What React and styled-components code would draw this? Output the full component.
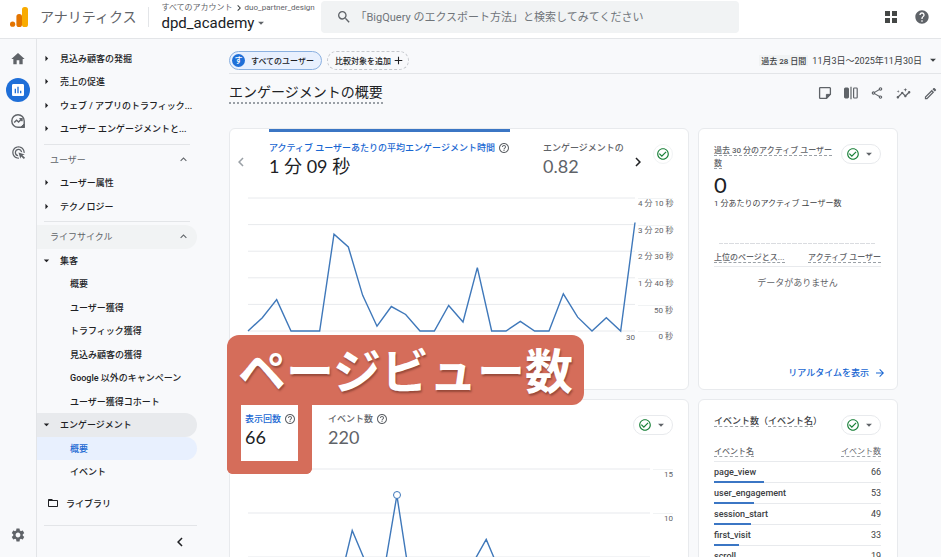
import React from "react";
import styled, { createGlobalStyle } from "styled-components";
import {
  MdAdd,
  MdAdsClick,
  MdArrowDropDown,
  MdArrowForward,
  MdArrowRight,
  MdCheckCircleOutline,
  MdChevronLeft,
  MdChevronRight,
  MdExpandLess,
  MdFolderOpen,
  MdHelp,
  MdHelpOutline,
  MdHome,
  MdInsertChart,
  MdInsights,
  MdOutlineEdit,
  MdOutlineShare,
  MdSearch,
  MdSettings,
} from "react-icons/md";

const menu = [
  { type: "group", label: "ビジネス目標", muted: true },
  { type: "item", label: "見込み顧客の発掘", arrow: "right" },
  { type: "item", label: "売上の促進", arrow: "right" },
  { type: "item", label: "ウェブ / アプリのトラフィック...", arrow: "right" },
  { type: "item", label: "ユーザー エンゲージメントと...", arrow: "right" },
  { type: "line" },
  { type: "group", label: "ユーザー" },
  { type: "item", label: "ユーザー属性", arrow: "right" },
  { type: "item", label: "テクノロジー", arrow: "right" },
  { type: "line" },
  { type: "group", label: "ライフサイクル", bg: "#f1f3f4" },
  { type: "item", label: "集客", arrow: "down" },
  { type: "sub", label: "概要" },
  { type: "sub", label: "ユーザー獲得" },
  { type: "sub", label: "トラフィック獲得" },
  { type: "sub", label: "見込み顧客の獲得" },
  { type: "sub", label: "Google 以外のキャンペーン" },
  { type: "sub", label: "ユーザー獲得コホート" },
  { type: "item", label: "エンゲージメント", arrow: "down", bg: "#e8eaed" },
  { type: "sub", label: "概要", bg: "#e8f0fe", active: true },
  { type: "sub", label: "イベント" },
];

const engagement = [
  0, 25, 59, 0, 0, 0, 182, 158, 67, 9, 46, 31, 0, 0, 48, 17, 119, 0, 0, 18, 0,
  0, 70, 26, 0, 25, 0, 204,
];
const views = [
  0, 1, 0, 0, 2, 0, 1, 8, 4, 2, 12, 1, 0, 0, 1, 4, 7, 3, 0, 1, 0, 0, 2, 0, 0, 1,
  0, 3,
];

const events = [
  { name: "page_view", count: 66 },
  { name: "user_engagement", count: 53 },
  { name: "session_start", count: 49 },
  { name: "first_visit", count: 33 },
  { name: "scroll", count: 19 },
];

const LogoSvg = () => (
  <svg width="18" height="20" viewBox="0 0 18 20" aria-hidden="true">
    <rect x="12" y="0" width="6" height="20" rx="2.6" fill="#f9ab00" />
    <rect x="6.4" y="7" width="5.6" height="13" rx="2.6" fill="#e37400" />
    <circle cx="2.6" cy="17.2" r="2.6" fill="#e37400" />
  </svg>
);

const ExploreSvg = () => (
  <svg width="16" height="16" viewBox="0 0 16 16" fill="none" stroke="#5f6368">
    <path
      d="M8 1.8a6.2 6.2 0 1 0 0 12.4h6.2V8A6.2 6.2 0 0 0 8 1.8Z"
      strokeWidth="1.4"
    />
    <path d="M4.2 9.6 6.6 7.2l2 1.8 3.2-3.2M9.4 5.6H12v2.6" strokeWidth="1.4" />
    <path d="M11 13.9 14 11v3Z" fill="#5f6368" />
  </svg>
);

const NoteSvg = () => (
  <svg width="14" height="14" viewBox="0 0 14 14" fill="none" stroke="#5f6368">
    <path
      d="M2.2 1.7h9.6a.6.6 0 0 1 .6.6v6L8.6 12.3H2.2a.6.6 0 0 1-.6-.6V2.3a.6.6 0 0 1 .6-.6Z"
      strokeWidth="1.3"
    />
    <path d="M8.4 12.2V8.4h3.8Z" fill="#5f6368" />
  </svg>
);

const CompareSvg = () => (
  <svg width="14" height="14" viewBox="0 0 14 14" fill="none" stroke="#5f6368">
    <rect x="0.5" y="2" width="4" height="10" rx="0.8" fill="#5f6368" />
    <path d="M7 0.8v12.4" strokeWidth="1.2" />
    <rect x="9.6" y="2" width="3.6" height="10" rx="0.8" strokeWidth="1.2" />
  </svg>
);

const AppsSvg = () => (
  <svg width="14" height="14" viewBox="0 0 14 14" fill="#444746">
    <rect x="1" y="1" width="5" height="5" />
    <rect x="8" y="1" width="5" height="5" />
    <rect x="1" y="8" width="5" height="5" />
    <rect x="8" y="8" width="5" height="5" />
  </svg>
);

const LineChart = ({ data, max, rows, marker }) => {
  const points = data
    .map((v, i) => `${i},${(1 - v / max) * 100}`)
    .join(" ");
  return (
    <Plot>
      <svg
        viewBox={`0 0 ${data.length - 1} 100`}
        preserveAspectRatio="none"
        aria-hidden="true"
      >
        {Array.from({ length: rows + 1 }, (_, i) => (
          <line
            key={i}
            x1="0"
            x2={data.length - 1}
            y1={(i * 100) / rows}
            y2={(i * 100) / rows}
            stroke="#e8eaed"
            vectorEffect="non-scaling-stroke"
          />
        ))}
        <polyline
          points={points}
          fill="none"
          stroke="#3f78ba"
          strokeWidth="1.4"
          vectorEffect="non-scaling-stroke"
        />
      </svg>
      {marker !== undefined && (
        <Marker
          style={{
            left: `${(marker / (data.length - 1)) * 100}%`,
            top: `${(1 - data[marker] / max) * 100}%`,
          }}
        />
      )}
    </Plot>
  );
};

const CheckMenu = ({ label }) => (
  <StatusButton aria-label={label}>
    <MdCheckCircleOutline size={14} color="#188038" />
    <MdArrowDropDown size={14} color="#5f6368" />
  </StatusButton>
);

const App = () => {
  return (
    <Page>
      <GlobalStyle />
      <Header>
        <Brand>
          <LogoSvg />
          <span>アナリティクス</span>
        </Brand>
        <Account>
          <p>
            すべてのアカウント
            <MdChevronRight size={12} color="#3c4043" />
            duo_partner_design
          </p>
          <button>
            dpd_academy
            <MdArrowDropDown size={14} color="#5f6368" />
          </button>
        </Account>
        <SearchBox>
          <MdSearch size={16} color="#5f6368" />
          <input
            type="text"
            aria-label="検索"
            placeholder="「BigQuery のエクスポート方法」と検索してみてください"
          />
        </SearchBox>
        <HeaderTools>
          <IconButton aria-label="アプリ">
            <AppsSvg />
          </IconButton>
          <IconButton aria-label="ヘルプ">
            <MdHelp size={16} />
          </IconButton>
        </HeaderTools>
      </Header>

      <Body>
        <Rail>
          <RailButton aria-label="ホーム">
            <MdHome size={16} />
          </RailButton>
          <RailButton aria-label="レポート" $active>
            <MdInsertChart size={16} />
          </RailButton>
          <RailButton aria-label="探索">
            <ExploreSvg />
          </RailButton>
          <RailButton aria-label="広告">
            <MdAdsClick size={15} />
          </RailButton>
          <RailButton className="bottom" aria-label="管理">
            <MdSettings size={16} />
          </RailButton>
        </Rail>

        <Sidebar>
          <MenuList>
            {menu.map((row, i) => {
              if (row.type === "line") return <MenuLine key={i} />;
              return (
                <MenuRow key={i} $bg={row.bg}>
                  <MenuLink
                    href="#"
                    $type={row.type}
                    $active={row.active}
                  >
                    {row.type === "item" && (
                      <i>
                        {row.arrow === "right" && <MdArrowRight size={13} />}
                        {row.arrow === "down" && <MdArrowDropDown size={13} />}
                      </i>
                    )}
                    <span>{row.label}</span>
                    {row.type === "group" && !row.muted && (
                      <MdExpandLess size={13} />
                    )}
                  </MenuLink>
                </MenuRow>
              );
            })}
            <MenuRow className="library">
              <MenuLink href="#" $type="library">
                <MdFolderOpen size={12} />
                <span>ライブラリ</span>
              </MenuLink>
            </MenuRow>
          </MenuList>
          <SidebarFooter>
            <IconButton aria-label="メニューを閉じる" $dark>
              <MdChevronLeft size={18} />
            </IconButton>
          </SidebarFooter>
        </Sidebar>

        <Main>
          <FilterBar>
            <UserChip>
              <em>す</em>すべてのユーザー
            </UserChip>
            <AddChip>
              比較対象を追加
              <MdAdd size={13} />
            </AddChip>
            <DateButton>
              <em>過去 28 日間</em>
              11月3日～2025年11月30日
              <MdArrowDropDown size={14} />
            </DateButton>
          </FilterBar>

          <TitleBar>
            <h1>エンゲージメントの概要</h1>
            <Tools>
              <IconButton aria-label="メモ">
                <NoteSvg />
              </IconButton>
              <IconButton aria-label="比較">
                <CompareSvg />
              </IconButton>
              <IconButton aria-label="共有">
                <MdOutlineShare size={14} />
              </IconButton>
              <IconButton aria-label="インサイト">
                <MdInsights size={15} />
              </IconButton>
              <IconButton aria-label="編集">
                <MdOutlineEdit size={15} />
              </IconButton>
            </Tools>
          </TitleBar>

          <Cards>
            <Card>
              <MetricHead className="pager">
                <IconButton className="prev" aria-label="前へ" $light>
                  <MdChevronLeft size={18} />
                </IconButton>
                <Metric className="wide" $active $bar>
                  <span>
                    アクティブ ユーザーあたりの平均エンゲージメント時間
                    <MdHelpOutline size={12} />
                  </span>
                  <strong>1 分 09 秒</strong>
                </Metric>
                <Metric>
                  <span>エンゲージメントの</span>
                  <strong>0.82</strong>
                </Metric>
                <IconButton className="next" aria-label="次へ" $dark>
                  <MdChevronRight size={18} />
                </IconButton>
                <StatusDot aria-label="データの状態">
                  <MdCheckCircleOutline size={14} color="#188038" />
                </StatusDot>
              </MetricHead>
              <ChartArea $scale={38} $height={133}>
                <LineChart data={engagement} max={250} rows={5} />
                <Scale $size={160}>
                  <li>4 分 10 秒</li>
                  <li>3 分 20 秒</li>
                  <li>2 分 30 秒</li>
                  <li>1 分 40 秒</li>
                  <li>50 秒</li>
                  <li>0 秒</li>
                </Scale>
                <Axis>30</Axis>
              </ChartArea>
            </Card>

            <Card>
              <SideHead>
                <h2>
                  <u>過去 30 分のアクティブ ユーザー数</u>
                </h2>
                <CheckMenu label="リアルタイムの状態" />
              </SideHead>
              <Realtime>
                <strong>0</strong>
                <p>1 分あたりのアクティブ ユーザー数</p>
                <EmptyBars>
                  {Array.from({ length: 30 }, (_, i) => (
                    <i key={i} />
                  ))}
                </EmptyBars>
                <RealtimeTable>
                  <thead>
                    <tr>
                      <th>
                        <u>上位のページとス...</u>
                      </th>
                      <th>
                        <u>アクティブ ユーザー</u>
                      </th>
                    </tr>
                  </thead>
                  <tbody>
                    <tr>
                      <td colSpan={2}>データがありません</td>
                    </tr>
                  </tbody>
                </RealtimeTable>
                <MoreLink href="#">
                  リアルタイムを表示
                  <MdArrowForward size={12} />
                </MoreLink>
              </Realtime>
            </Card>

            <Card>
              <MetricHead>
                <Metric $active>
                  <span>
                    表示回数
                    <MdHelpOutline size={12} />
                  </span>
                  <strong>66</strong>
                </Metric>
                <Metric>
                  <span>
                    イベント数
                    <MdHelpOutline size={12} />
                  </span>
                  <strong>220</strong>
                </Metric>
                <CheckMenu label="表示回数の状態" />
              </MetricHead>
              <ChartArea $scale={23} $height={132}>
                <LineChart data={views} max={15} rows={3} marker={10} />
                <Scale $size={176}>
                  <li>15</li>
                  <li>10</li>
                  <li>5</li>
                  <li>0</li>
                </Scale>
              </ChartArea>
              <Callout>
                <p>ページビュー数</p>
                <div />
              </Callout>
            </Card>

            <Card>
              <SideHead className="events">
                <h2>
                  <u>イベント数</u>（<u>イベント名</u>）
                </h2>
                <CheckMenu label="イベントの状態" />
              </SideHead>
              <EventTable>
                <thead>
                  <tr>
                    <th>
                      <u>イベント名</u>
                    </th>
                    <th>
                      <u>イベント数</u>
                    </th>
                  </tr>
                </thead>
                <tbody>
                  {events.map((event) => (
                    <tr key={event.name}>
                      <td>
                        {event.name}
                        <Bar style={{ width: `${(event.count / 66) * 40}%` }} />
                      </td>
                      <td>{event.count}</td>
                    </tr>
                  ))}
                </tbody>
              </EventTable>
            </Card>
          </Cards>
        </Main>
      </Body>
    </Page>
  );
};

const GlobalStyle = createGlobalStyle`
  * {
    box-sizing: border-box;
  }

  body {
    margin: 0;
    background: #f8f9fb;
    color: #202124;
    font-family: Roboto, "Noto Sans CJK JP", sans-serif;
    font-size: 9px;
  }

  h1, h2, p, ul {
    margin: 0;
    padding: 0;
  }

  ul {
    list-style: none;
  }

  em, i {
    font-style: normal;
  }

  u {
    text-decoration: none;
    border-bottom: 1px dashed #9aa0a6;
  }

  a {
    color: inherit;
    text-decoration: none;
  }

  button, input {
    margin: 0;
    padding: 0;
    border: none;
    background: none;
    color: inherit;
    font: inherit;
  }

  svg {
    flex: none;
  }
`;

const Page = styled.div`
  display: flex;
  flex-direction: column;
  height: 100vh;
  overflow: hidden;
`;

const Header = styled.header`
  position: relative;
  z-index: 2;
  display: flex;
  align-items: center;
  height: 39px;
  padding: 0 11px 4px 10px;
  border-bottom: 1px solid #e3e5e8;
  background: #fff;
`;

const Brand = styled.div`
  display: flex;
  align-items: center;
  gap: 12px;
  padding-right: 12px;
  border-right: 1px solid #e3e5e8;
  color: #5f6368;
  font-size: 14px;
  line-height: 20px;
`;

const Account = styled.div`
  flex: none;
  width: 172px;
  padding-left: 12px;
  white-space: nowrap;

  p {
    display: flex;
    align-items: center;
    color: #5f6368;
    font-size: 8px;
    line-height: 12px;
  }

  button {
    display: flex;
    align-items: center;
    font-size: 15px;
    line-height: 18px;
  }
`;

const SearchBox = styled.label`
  display: flex;
  flex: 0 1 418px;
  align-items: center;
  gap: 3px;
  height: 32px;
  padding: 0 15px;
  border-radius: 4px;
  background: #f1f3f4;

  input {
    flex: 1;
    min-width: 0;
    outline: none;
    font-size: 11px;
  }

  input::placeholder {
    color: #70757a;
    opacity: 1;
  }
`;

const HeaderTools = styled.div`
  display: flex;
  align-items: center;
  gap: 16px;
  margin-left: auto;
`;

const IconButton = styled.button`
  display: flex;
  align-items: center;
  justify-content: center;
  color: ${(p) => (p.$dark ? "#202124" : p.$light ? "#9aa0a6" : "#5f6368")};
`;

const Body = styled.div`
  display: flex;
  flex: 1;
  min-height: 0;
`;

const Rail = styled.nav`
  display: flex;
  flex: none;
  flex-direction: column;
  align-items: center;
  gap: 7px;
  width: 37px;
  padding: 8px 0 10px;
  border-right: 1px solid #e3e5e8;

  .bottom {
    margin-top: auto;
  }
`;

const RailButton = styled.button`
  display: flex;
  align-items: center;
  justify-content: center;
  width: 24px;
  height: 24px;
  border-radius: 50%;
  background: ${(p) => (p.$active ? "#1f6fd8" : "none")};
  color: ${(p) => (p.$active ? "#fff" : "#5f6368")};
`;

const Sidebar = styled.aside`
  display: flex;
  flex: none;
  flex-direction: column;
  width: 160px;
  margin-right: 26px;
`;

const MenuList = styled.ul`
  display: flex;
  flex: 1;
  flex-direction: column;
  margin-top: -16px;
  padding-bottom: 10px;

  .library {
    margin-top: 8px;
  }
`;

const MenuRow = styled.li`
  display: flex;
  flex: 1;
  border-radius: 0 12px 12px 0;
  background: ${(p) => p.$bg || "none"};
`;

const indent = { sub: 33, group: 13, library: 10, item: 3 };

const MenuLink = styled.a`
  display: flex;
  flex: 1;
  align-items: center;
  padding: 0 7px 0 ${(p) => indent[p.$type]}px;
  color: ${(p) => (p.$active ? "#1967d2" : p.$type === "group" ? "#5f6368" : "#202124")};
  font-weight: ${(p) => (p.$type === "group" ? 400 : 500)};
  white-space: nowrap;

  i {
    display: flex;
    width: 20px;
  }

  span {
    flex: 1;
  }

  svg + span {
    margin-left: 7px;
  }
`;

const MenuLine = styled.li`
  height: 4px;
  margin: 0 7px 3px;
  border-bottom: 1px solid #e3e5e8;
`;

const SidebarFooter = styled.div`
  display: flex;
  justify-content: flex-end;
  height: 32px;
  margin: 0 0 0 7px;
  padding-right: 8px;
  border-top: 1px solid #e3e5e8;
`;

const Main = styled.main`
  flex: 1;
  min-width: 0;
  padding-left: 6px;
  overflow: auto;
  scrollbar-width: none;
`;

const FilterBar = styled.div`
  display: flex;
  align-items: center;
  gap: 5px;
  height: 35px;
  padding: 8px 1px 0 0;
  border-bottom: 1px solid #e3e5e8;
  white-space: nowrap;
`;

const UserChip = styled.button`
  display: flex;
  align-items: center;
  gap: 6px;
  height: 19px;
  padding: 0 7px 0 2px;
  border: 1px solid #8ab0e0;
  border-radius: 10px;
  background: #e8f0fe;
  font-size: 8px;
  font-weight: 500;

  em {
    width: 13px;
    border-radius: 50%;
    background: #1f6fd8;
    color: #fff;
    line-height: 13px;
  }
`;

const AddChip = styled.button`
  display: flex;
  align-items: center;
  gap: 1px;
  height: 19px;
  padding: 0 3px 0 7px;
  border: 1px dashed #c4c7cc;
  border-radius: 10px;
  font-size: 8px;
  font-weight: 500;
`;

const DateButton = styled.button`
  display: flex;
  align-items: center;
  gap: 4px;
  margin-left: auto;
  color: #3c4043;
  font-size: 9px;

  em {
    padding: 0 2px;
    background: #f1f3f4;
    font-size: 8px;
    font-weight: 500;
  }
`;

const TitleBar = styled.div`
  display: flex;
  align-items: center;
  justify-content: space-between;
  height: 54px;
  padding: 0 3px 16px 0;

  h1 {
    border-bottom: 2px dotted #9aa0a6;
    font-size: 14px;
    font-weight: 400;
    line-height: 20px;
  }
`;

const Tools = styled.div`
  display: flex;
  gap: 12px;
`;

const Cards = styled.div`
  display: grid;
  grid-template-columns: 1fr 200px;
  grid-auto-rows: minmax(262px, auto);
  gap: 9px;
  padding-right: 43px;
`;

const Card = styled.section`
  position: relative;
  min-width: 0;
  border: 1px solid #e8eaed;
  border-radius: 6px;
  background: #fff;
`;

const StatusButton = styled.button`
  display: flex;
  flex: none;
  align-items: center;
  justify-content: space-between;
  width: 40px;
  height: 20px;
  margin-left: auto;
  padding: 0 4px;
  border: 1px solid #e8eaed;
  border-radius: 10px;
`;

const StatusDot = styled.button`
  display: flex;
  flex: none;
  align-items: center;
  justify-content: center;
  width: 20px;
  height: 20px;
  margin-top: 15px;
  border: 1px solid #f1f3f4;
  border-radius: 50%;
`;

const Metric = styled.div`
  padding-top: ${(p) => (p.$bar ? 10 : 13)}px;
  border-top: ${(p) => (p.$bar ? "3px solid #3b76c4" : "none")};
  white-space: nowrap;

  span {
    display: flex;
    align-items: center;
    gap: 3px;
    color: ${(p) => (p.$active ? "#1967d2" : "#5f6368")};
    font-weight: 500;
    line-height: 12px;
  }

  svg {
    color: #5f6368;
  }

  strong {
    display: block;
    color: ${(p) => (p.$active ? "#202124" : "#5f6368")};
    font-family: Lato, "Noto Sans CJK JP", sans-serif;
    font-size: 18px;
    font-weight: 400;
    line-height: 24px;
  }
`;

const MetricHead = styled.div`
  display: flex;
  align-items: flex-start;
  gap: 32px;
  height: 69px;
  padding: 0 15px 0 15px;

  ${StatusButton} {
    margin-top: 15px;
  }

  &.pager {
    gap: 0;
    padding-left: 2px;
  }

  .prev,
  .next {
    width: 18px;
    margin-top: 24px;
  }

  .wide {
    width: 241px;
    margin: 0 33px 0 19px;
  }

  .next {
    margin-left: auto;
    margin-right: 6px;
  }
`;

const ChartArea = styled.div`
  display: grid;
  grid-template-columns: 1fr ${(p) => p.$scale}px;
  grid-template-rows: ${(p) => p.$height}px auto;
  padding: 0 15px 0 18px;
`;

const Plot = styled.div`
  position: relative;

  svg {
    display: block;
    width: 100%;
    height: 100%;
    overflow: visible;
  }
`;

const Marker = styled.i`
  position: absolute;
  width: 8px;
  height: 8px;
  border: 1px solid #3f78ba;
  border-radius: 50%;
  background: #fff;
  transform: translate(-50%, -50%);
`;

const Scale = styled.ul`
  display: flex;
  flex-direction: column;
  height: ${(p) => p.$size}px;
  margin-left: 3px;
  color: #5f6368;
  font-size: 8px;
  line-height: 9px;
  text-align: right;
  white-space: nowrap;

  li {
    flex: 1;
    border-top: 1px solid #f1f3f4;
  }
`;

const Axis = styled.p`
  grid-row: 2;
  grid-column: 1;
  color: #5f6368;
  font-size: 8px;
  line-height: 14px;
  text-align: right;
`;

const Callout = styled.div`
  position: absolute;
  top: -65px;
  left: -3px;
  z-index: 1;
  pointer-events: none;

  p {
    padding: 0 11px 4px;
    border-radius: 12px 12px 12px 0;
    background: #d56d5a;
    color: #fff;
    font-family: "Noto Sans CJK JP", sans-serif;
    font-size: 48px;
    font-weight: 700;
    line-height: 66px;
    text-shadow: 1px 2px 2px rgba(60, 20, 10, 0.4);
    white-space: nowrap;
  }

  div {
    width: 85px;
    height: 69px;
    border: solid #d56d5a;
    border-width: 0 14px 13px;
    border-radius: 0 0 6px 6px;
  }
`;

const SideHead = styled.div`
  display: flex;
  align-items: flex-start;
  gap: 6px;
  padding: 15px 16px 0 15px;

  h2 {
    color: #5f6368;
    font-size: 8px;
    font-weight: 500;
    line-height: 13px;
  }

  &.events h2 {
    color: #3c4043;
    font-size: 9px;
    white-space: nowrap;
  }
`;

const Realtime = styled.div`
  padding: 3px 16px 0 15px;

  strong {
    display: block;
    font-family: Lato, sans-serif;
    font-size: 22px;
    font-weight: 400;
    line-height: 24px;
  }

  p {
    color: #3c4043;
    font-size: 8px;
    line-height: 14px;
  }
`;

const EmptyBars = styled.div`
  display: flex;
  gap: 1px;
  margin: 32px 6px 4px 5px;

  i {
    flex: 1;
    height: 1px;
    background: #dadce0;
  }
`;

const RealtimeTable = styled.table`
  width: 100%;
  border-collapse: collapse;

  th {
    padding: 0;
    height: 18px;
    border-bottom: 1px solid #e8eaed;
    color: #5f6368;
    font-size: 8px;
    font-weight: 500;
    text-align: left;
    white-space: nowrap;
  }

  th + th {
    text-align: right;
  }

  td {
    height: 32px;
    padding: 0;
    color: #5f6368;
    font-size: 9px;
    text-align: center;
  }
`;

const MoreLink = styled.a`
  position: absolute;
  right: 11px;
  bottom: 10px;
  display: flex;
  align-items: center;
  gap: 5px;
  color: #1967d2;
  font-size: 9px;
  font-weight: 500;
`;

const EventTable = styled.table`
  width: calc(100% - 31px);
  margin: 5px 16px 0 15px;
  border-collapse: collapse;
  table-layout: fixed;

  th {
    width: 75%;
    height: 21px;
    padding: 0;
    border-bottom: 1px solid #e8eaed;
    color: #5f6368;
    font-size: 8px;
    font-weight: 500;
    text-align: left;
    white-space: nowrap;
  }

  th + th {
    width: 25%;
  }

  td {
    position: relative;
    height: 21px;
    padding: 0;
    border-bottom: 1px solid #e8eaed;
    color: #3c4043;
    font-size: 9px;
    font-weight: 500;
  }

  th + th,
  td + td {
    text-align: right;
    font-weight: 400;
  }
`;

const Bar = styled.i`
  position: absolute;
  bottom: -1px;
  left: 0;
  height: 2px;
  background: #3b76c4;
`;

export default App;
